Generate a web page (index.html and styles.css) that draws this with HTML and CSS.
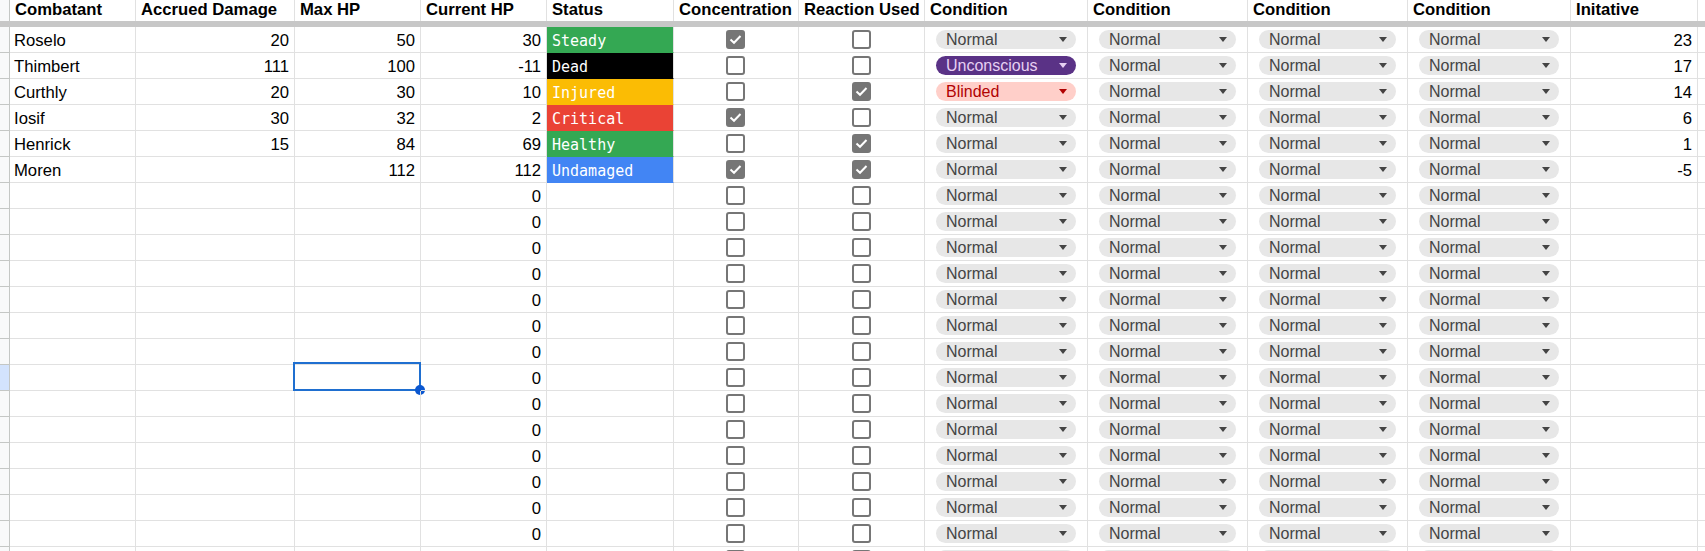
FILE: index.html
```html
<!DOCTYPE html>
<html lang="en">
<head>
<meta charset="UTF-8">
<title>Combat Tracker</title>
<link rel="stylesheet" href="styles.css">
<script type="text/javascript">
    // name, damage, maxhp, curhp, status, conc, reaction, condition, init
    var rows = [
        ['Roselo', 20, 50, 30, 'Steady', 1, 0, 'Normal', 23],
        ['Thimbert', 111, 100, -11, 'Dead', 0, 0, 'Unconscious', 17],
        ['Curthly', 20, 30, 10, 'Injured', 0, 1, 'Blinded', 14],
        ['Iosif', 30, 32, 2, 'Critical', 1, 0, 'Normal', 6],
        ['Henrick', 15, 84, 69, 'Healthy', 0, 1, 'Normal', 1],
        ['Moren', '', 112, 112, 'Undamaged', 1, 1, 'Normal', -5]
    ];
    var check = '<svg width="15" height="15" viewBox="0 0 15 15"><polyline points="2.5,7.5 6,10.8 12.5,4" fill="none" stroke="#fff" stroke-width="2"/></svg>';

    function box(on){
        return '<div class="cell mid"><div class="chk' + (on ? ' on' : '') + '">' + (on ? check : '') + '</div></div>';
    }
    function chip(txt){
        return '<div class="cell pill"><div class="chip ' + txt.toLowerCase() + '">' + txt + '<span class="arw"></span></div></div>';
    }

    var tag = '';
    for(var i=0; i<21; i++){
        var r = rows[i] || ['', '', '', 0, '', 0, 0, 'Normal', ''];
        tag += '<div class="row' + (i==13 ? ' sel' : '') + '">';
        tag += '<div class="cell rh"></div>';
        tag += '<div class="cell txt">' + r[0] + '</div>';
        tag += '<div class="cell txt num">' + r[1] + '</div>';
        tag += '<div class="cell txt num">' + r[2] + (i==13 ? '<div class="pick"><span class="dot"></span></div>' : '') + '</div>';
        tag += '<div class="cell txt num">' + r[3] + '</div>';
        tag += '<div class="cell txt stat ' + r[4].toLowerCase() + '">' + r[4] + '</div>';
        tag += box(r[5]) + box(r[6]);
        tag += chip(r[7]) + chip('Normal') + chip('Normal') + chip('Normal');
        tag += '<div class="cell txt num">' + r[8] + '</div>';
        tag += '<div class="cell"></div>';
        tag += '</div>';
    }
</script>
</head>
<body>
<div class="sheet">
    <div class="row head">
        <div class="cell rh"></div>
        <div class="cell">Combatant</div>
        <div class="cell">Accrued Damage</div>
        <div class="cell">Max HP</div>
        <div class="cell">Current HP</div>
        <div class="cell">Status</div>
        <div class="cell">Concentration</div>
        <div class="cell">Reaction Used</div>
        <div class="cell">Condition</div>
        <div class="cell">Condition</div>
        <div class="cell">Condition</div>
        <div class="cell">Condition</div>
        <div class="cell">Initative</div>
        <div class="cell"></div>
    </div>
    <div class="freeze"></div>
    <script type="text/javascript">
        document.write(tag);
    </script>
</div>
</body>
</html>
```

FILE: styles.css
```css
body{margin:0; overflow:hidden; background:#fff; font-family:"Liberation Sans", Arial, sans-serif; font-size:16.67px; color:#000;}
.sheet{width:1705px; height:551px; overflow:hidden;}
.row{display:grid; grid-template-columns:10px 126px 159px 126px 126px 127px 125px 126px 163px 160px 160px 163px 127px 1fr; height:26px;}
.cell{position:relative; box-sizing:border-box; border-right:1px solid #e1e1e1; border-bottom:1px solid #e1e1e1; padding:0 5px 0 4px; display:flex; align-items:center; white-space:nowrap; overflow:visible;}
.txt{padding-top:2px;}
.num{justify-content:flex-end; padding-right:5px;}
.mid{justify-content:center;}

/* header + frozen bar */
.head{height:21px;}
.head .cell{border-bottom:0; align-items:flex-start; line-height:19px; font-weight:bold; padding-left:5px;}
.freeze{height:6px; background:#c7c7c7;}

/* row header strip on the left */
.rh{background:#f8f9fa; border-right:1px solid #c4c7c5; border-bottom:1px solid #c4c7c5; padding:0;}
.head .rh{background:#f8f9fa;}
.sel .rh{background:#d3e3fd;}

/* status fills */
.stat{font-family:"DejaVu Sans Mono", monospace; font-size:15px; color:#fff; padding-left:5px;}
.steady, .healthy{background:#34a853; border-bottom-color:#34a853;}
.dead{background:#000; border-bottom-color:#000;}
.injured{background:#fbbc04; border-bottom-color:#fbbc04;}
.critical{background:#ea4335; border-bottom-color:#ea4335;}
.undamaged{background:#4285f4; border-bottom-color:#4285f4;}

/* checkboxes */
.chk{width:19px; height:19px; box-sizing:border-box; border:2px solid #767676; border-radius:3px;}
.chk.on{background:#767676;}
.chk svg{display:block;}

/* dropdown chips */
.pill{padding:0 11px 0 11px;}
.chip{position:relative; flex:1; height:19px; border-radius:10px; background:#e7e7e7; color:#444; padding-left:10px; line-height:20px; font-size:16px;}
.arw{position:absolute; right:9px; top:7px; border-left:4.5px solid transparent; border-right:4.5px solid transparent; border-top:5px solid #444;}
.unconscious{background:#5a3286; color:#e6cff2;}
.unconscious .arw{border-top-color:#e6cff2;}
.blinded{background:#ffcfc9; color:#b10202;}
.blinded .arw{border-top-color:#b10202;}

/* selected cell */
.pick{position:absolute; top:-3px; left:-2px; right:-1px; bottom:-1px; border:2px solid #1f6fd0; pointer-events:none;}
.dot{position:absolute; right:-6px; bottom:-6px; width:10px; height:10px; border-radius:50%; background:#0b57d0;}
```
